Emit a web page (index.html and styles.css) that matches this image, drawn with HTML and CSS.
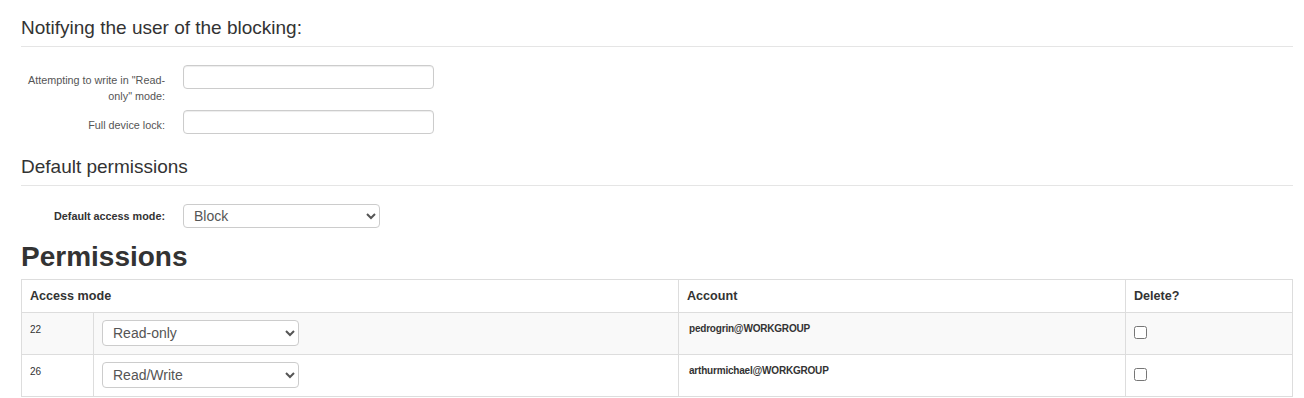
FILE: index.html
```html
<!DOCTYPE html>
<html lang="en">
<head>
  <meta charset="UTF-8" />
  <title>Device control</title>
  <link rel="stylesheet" href="styles.css">
</head>
<body>
  <div class="page">
    <h4 class="section-title first">Notifying the user of the blocking:</h4>
    <div class="form-row">
      <label class="form-label">Attempting to write in "Read-only" mode:</label>
      <input type="text" class="form-input">
    </div>
    <div class="form-row">
      <label class="form-label">Full device lock:</label>
      <input type="text" class="form-input">
    </div>

    <h4 class="section-title">Default permissions</h4>
    <div class="form-row centered">
      <label class="form-label strong">Default access mode:</label>
      <select class="form-select wide">
        <option>Block</option>
        <option>Read-only</option>
        <option>Read/Write</option>
      </select>
    </div>

    <h2 class="big-title">Permissions</h2>
    <table class="perm-table">
      <thead>
        <tr>
          <th colspan="2">Access mode</th>
          <th>Account</th>
          <th>Delete?</th>
        </tr>
      </thead>
      <tbody>
        <tr class="striped">
          <td class="id-col">22</td>
          <td class="mode-col">
            <select class="form-select">
              <option>Read-only</option>
              <option>Read/Write</option>
              <option>Block</option>
            </select>
          </td>
          <td class="account-col">pedrogrin@WORKGROUP</td>
          <td class="del-col"><input type="checkbox"></td>
        </tr>
        <tr>
          <td class="id-col">26</td>
          <td class="mode-col">
            <select class="form-select">
              <option>Read/Write</option>
              <option>Read-only</option>
              <option>Block</option>
            </select>
          </td>
          <td class="account-col">arthurmichael@WORKGROUP</td>
          <td class="del-col"><input type="checkbox"></td>
        </tr>
      </tbody>
    </table>
  </div>
</body>
</html>
```

FILE: styles.css
```css
* { margin: 0; padding: 0; box-sizing: border-box; }
body {
  font-family: 'Liberation Sans', Arial, sans-serif;
  font-size: 14px;
  color: #333;
  background: #fff;
}

.page { padding: 0 11px 0 21px; }

/* Section headings */
.section-title {
  font-size: 19px;
  font-weight: 400;
  line-height: 21px;
  margin-top: 22px;
  padding-bottom: 8px;
  border-bottom: 1px solid #e5e5e5;
  margin-bottom: 18px;
}
.section-title.first { margin-top: 17px; }

/* Form rows */
.form-row {
  display: flex;
  align-items: flex-start;
  gap: 18px;
  margin-bottom: 6px;
}
.form-row.centered { align-items: center; margin-bottom: 0; }
.form-label {
  width: 144px;
  flex: 0 0 144px;
  text-align: right;
  font-size: 10.8px;
  line-height: 16px;
  color: #555;
  padding-top: 7px;
}
.form-row.centered .form-label { padding-top: 0; }
.form-label.strong { font-weight: 700; color: #333; }

.form-input {
  width: 251px;
  height: 24px;
  border: 1px solid #ccc;
  border-radius: 4px;
  box-shadow: inset 0 1px 1px rgba(0,0,0,0.075);
  font-family: inherit;
  font-size: 14px;
  padding: 2px 8px;
}

.form-select {
  width: 197px;
  height: 26px;
  border: 1px solid #ccc;
  border-radius: 4px;
  background: #fff;
  font-family: inherit;
  font-size: 14px;
  color: #555;
  padding: 0 6px;
}
.form-select.wide { height: 24px; }

/* Permissions */
.big-title {
  font-size: 28px;
  font-weight: 700;
  line-height: 31px;
  margin-top: 13px;
  margin-bottom: 7px;
}

.perm-table {
  width: 100%;
  border-collapse: collapse;
  border: 1px solid #ddd;
}
.perm-table th,
.perm-table td {
  border: 1px solid #ddd;
  text-align: left;
  vertical-align: top;
  padding: 7px 8px;
}
.perm-table th {
  font-size: 12.6px;
  font-weight: 700;
  line-height: 18px;
}
.perm-table tr.striped td { background: #f9f9f9; }
.perm-table td { font-size: 10px; line-height: 16px; height: 42px; }
.perm-table td.id-col { width: 72px; padding-top: 9px; }
.mode-col { width: 585px; }
.perm-table td.account-col {
  width: 447px;
  font-weight: 700;
  font-size: 10px;
  letter-spacing: -0.2px;
  padding: 8px 10px;
}
.del-col input { width: 13px; height: 13px; margin: 6px 0 0 0; }
```
